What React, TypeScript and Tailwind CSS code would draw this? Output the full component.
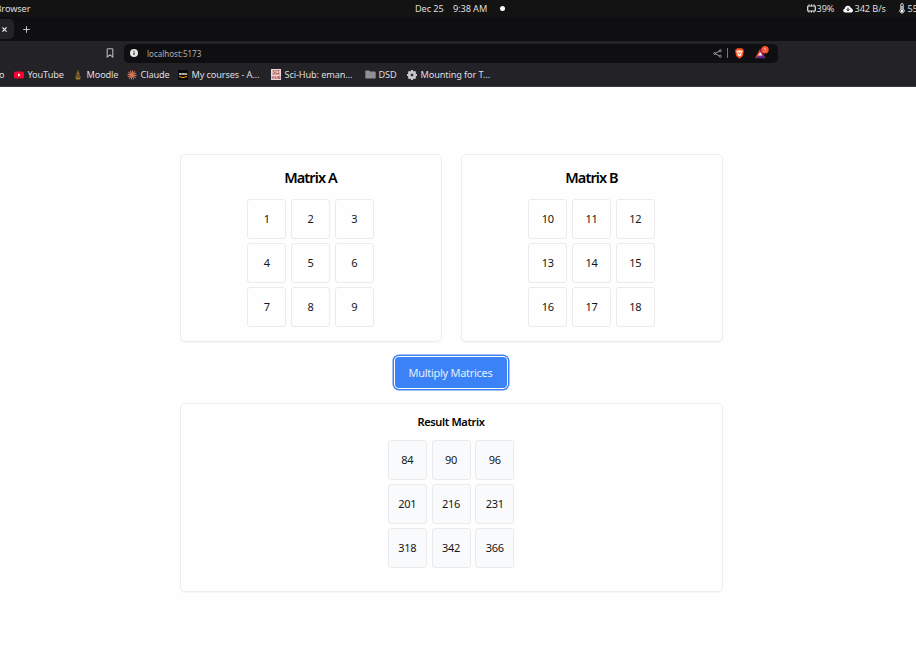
import React from "react";

const noto = "font-['Noto_Sans',sans-serif]";

function Matrix({ values, filled = false }: { values: number[]; filled?: boolean }) {
  return (
    <div className="grid grid-cols-[39px_39px_39px] gap-x-[4.7px] gap-y-[4.5px]">
      {values.map((v) => (
        <div
          key={v}
          className={
            "flex h-[39.5px] items-center justify-center rounded-[3px] border pt-px text-[11px] tracking-[-0.3px] text-[#161616] " +
            (filled ? "border-[#eaebed] bg-[#f9fafb]" : "border-[#ebebed] bg-[#fefefe]")
          }
        >
          {v}
        </div>
      ))}
    </div>
  );
}

function MatrixCard({ title, values }: { title: string; values: number[] }) {
  return (
    <section className="flex h-[188px] w-[262px] flex-col items-center rounded-[5px] border border-[#ededee] pt-3 shadow-[0_1px_1px_rgba(0,0,0,0.03)]">
      <h2 className="mb-3 h-5 text-[14.5px] leading-[21px] font-semibold tracking-[-0.9px] text-black">{title}</h2>
      <Matrix values={values} />
    </section>
  );
}

function Bookmark({ icon, label, className }: { icon: React.ReactNode; label: string; className: string }) {
  return (
    <div className={"flex h-4 shrink-0 items-center whitespace-nowrap " + className}>
      <span className="ml-[-0.5px] flex h-[11px] w-[11px] shrink-0 items-center justify-center">{icon}</span>
      <span className="ml-[3px]">{label}</span>
    </div>
  );
}

const rays = [0, 30, 60, 90, 120, 150];
const teeth = [0, 45, 90, 135];

export default function App() {
  return (
    <div className={"h-[660px] w-[916px] overflow-hidden bg-white " + noto}>
      <header className="flex h-[17px] items-center bg-[#131313] text-[9.2px] tracking-[-0.1px] text-[#dedede]">
        <div className="ml-[-4.5px] w-[419.5px] shrink-0 whitespace-nowrap">Browser</div>
        <div className="w-[38px] shrink-0 whitespace-nowrap">Dec 25</div>
        <div className="w-[46.5px] shrink-0 whitespace-nowrap">9:38 AM</div>
        <div className="h-[5px] w-[5px] shrink-0 rounded-full bg-white" />
        <svg className="ml-[302px] h-[9px] w-[9px] shrink-0" viewBox="0 0 9 9" fill="none" stroke="#e5e5e5">
          <rect x="0.7" y="2" width="7.6" height="5" rx="0.5" strokeWidth="1.2" />
          <path d="M2 0.4v1.6M4.5 0.4v1.6M7 0.4v1.6M2 7v1.6M4.5 7v1.6M7 7v1.6" />
        </svg>
        <div className="ml-[1px] w-[26px] shrink-0 whitespace-nowrap">39%</div>
        <svg className="h-[8px] w-[10px] shrink-0" viewBox="0 0 10 8">
          <path d="M2.4 7.5C.9 7.5.2 6.6.2 5.6.2 4.6.9 3.9 1.7 3.8 1.8 2 3 .7 4.9.7c1.6 0 2.8 1 3 2.6C9.2 3.5 9.9 4.4 9.9 5.4 9.9 6.7 9 7.5 7.8 7.5Z" fill="white" />
          <path d="M5 2.6v3.2M3.6 4.4 5 5.8l1.4-1.4" stroke="#131313" fill="none" />
        </svg>
        <div className="ml-[2px] w-[44px] shrink-0 whitespace-nowrap">342 B/s</div>
        <svg className="h-[11px] w-[6px] shrink-0" viewBox="0 0 6 11">
          <path d="M1.8 6V1.7a1.2 1.2 0 0 1 2.4 0V6a2.2 2.2 0 1 1-2.4 0Z" fill="none" stroke="#dedede" />
          <path d="M3 3v5" stroke="white" />
          <circle cx="3" cy="8" r="1.3" fill="white" />
        </svg>
        <div className="ml-[3px] shrink-0 whitespace-nowrap">55</div>
      </header>

      <nav className="flex h-6 items-center bg-[#0f0f11]">
        <div className="flex h-5 w-[14px] items-center rounded-r-[5px] bg-[#232327]">
          <svg className="ml-[2px] h-[5px] w-[5px]" viewBox="0 0 5 5" stroke="#eeeeee" strokeWidth="1.2">
            <path d="m.4.4 4.2 4.2m0-4.2L.4 4.6" />
          </svg>
        </div>
        <svg className="ml-[9px] h-[7px] w-[7px]" viewBox="0 0 7 7" stroke="#c6c6c8">
          <path d="M3.5.2v6.6M.2 3.5h6.6" />
        </svg>
      </nav>

      <div className="h-[46px] border-b border-[#39393e] bg-[#232327]">
        <div className="flex h-6 items-center">
          <svg className="ml-[106px] h-[10px] w-[8px]" viewBox="0 0 8 10" fill="none" stroke="#b8b8bb" strokeWidth="1.1">
            <path d="M1.2 1.6q0-.8.8-.8h4q.8 0 .8.8v7.4L4 6.9 1.2 9Z" />
          </svg>
          <div className="ml-[10px] flex h-[19px] w-[654px] items-center rounded-[5px] bg-[#0f0f11]">
            <svg className="ml-[6px] h-2 w-2" viewBox="0 0 8 8">
              <circle cx="4" cy="4" r="4" fill="#e6e6e7" />
              <path d="M4 3.5V6M4 1.8v1" stroke="#222225" strokeWidth="1.1" />
            </svg>
            <span className="ml-[9px] pt-px text-[8px] text-[#b1b1b3]">localhost:5173</span>
            <svg className="ml-auto h-[9px] w-[9px]" viewBox="0 0 9 9" fill="none" stroke="#a8a8aa" strokeWidth="0.9">
              <path d="M2.8 4 6.3 2.2M2.8 5l3.5 1.8" />
              <circle cx="1.7" cy="4.5" r="1" />
              <circle cx="7.3" cy="1.7" r="1" />
              <circle cx="7.3" cy="7.3" r="1" />
            </svg>
            <div className="ml-[5px] h-[10px] w-px bg-[#77777a]" />
            <svg className="ml-[7px] h-[11px] w-[9px]" viewBox="0 0 9 11">
              <path d="M2 .3h5l.7.9.9.2.2 1.5-.9 5L4.5 10.7 1.1 7.9l-.9-5 .2-1.5.9-.2Z" fill="#fb5422" />
              <path d="m1.8 2.5 1.4.3 1.3-.5 1.3.5 1.4-.3.3 1.4-1.3 2 .2 1-1.9 1.6-1.9-1.6.2-1-1.3-2Z" fill="white" />
              <path d="m2.6 4 1.3.6-.3 1.2M6.4 4l-1.3.6.3 1.2M4.5 5v1.6" fill="none" stroke="#fb5422" strokeWidth=".7" />
            </svg>
            <svg className="mr-[8px] ml-[11px] h-[15px] w-[15px]" viewBox="0 0 15 15">
              <path d="M5.3 2.6 0 12.3 5.3 9Z" fill="#ff4724" />
              <path d="M5.3 2.6 10.8 12.3 5.3 9Z" fill="#9e1f63" />
              <path d="M0 12.3h10.8L5.3 8.6Z" fill="#662d91" />
              <path d="M5.3 6 7.4 9.4H3.2Z" fill="white" />
              <circle cx="10" cy="3.8" r="3.7" fill="#fb542b" />
              <text x="10" y="5.9" textAnchor="middle" fontSize="5.5" fill="#ffd3c7">1</text>
            </svg>
          </div>
        </div>

        <div className="flex h-[21px] items-center overflow-hidden pb-[2px] text-[9.2px] tracking-[-0.12px] text-[#dedee0]">
          <div className="w-[14px] shrink-0"><span className="ml-[-1px]">o</span></div>
          <Bookmark className="w-[59px]" label="YouTube" icon={
            <svg className="h-2 w-[10px]" viewBox="0 0 10 8">
              <rect y=".5" width="10" height="7" rx="1.7" fill="#ff0033" />
              <path d="M4 2.5v3L6.7 4Z" fill="white" />
            </svg>
          } />
          <Bookmark className="w-[54px]" label="Moodle" icon={
            <svg className="h-[10px] w-[8px]" viewBox="0 0 8 10">
              <path d="M3.2.3h1.6v2l1.1 1-.5 1.5 1.5 2-.5 2.5H1.6l-.5-2.5 1.5-2-.5-1.5 1.1-1Z" fill="#6e5526" />
              <path d="M4 2.8v1.4M2 8.8h4" stroke="#b98a34" />
              <circle cx="4" cy="6.6" r="1" fill="#26221f" stroke="#ad8134" strokeWidth=".6" />
            </svg>
          } />
          <Bookmark className="w-[51px]" label="Claude" icon={
            <svg className="h-[10px] w-[10px]" viewBox="0 0 10 10" stroke="#d97757" strokeWidth="1">
              {rays.map((r) => <path key={r} d="M5 .4v9.2" transform={`rotate(${r + 8} 5 5)`} />)}
            </svg>
          } />
          <Bookmark className="w-[93px]" label="My courses - A…" icon={
            <svg className="h-[10px] w-[10px]" viewBox="0 0 10 10">
              <rect width="10" height="10" fill="#080808" />
              <text x="5" y="5.2" textAnchor="middle" fontSize="4.2" fontWeight="700" fill="white">aws</text>
              <path d="M1 6.5q4 2.3 8 0" stroke="#ff9900" fill="none" />
            </svg>
          } />
          <Bookmark className="w-[94px]" label="Sci-Hub: eman…" icon={
            <svg className="h-[11px] w-[10px]" viewBox="0 0 10 11">
              <rect width="10" height="11" fill="#ecd8d5" />
              <text x="5" y="4.6" textAnchor="middle" fontSize="4.7" fontWeight="700" fill="#b34742">SCI</text>
              <path d="M1 5.6h8" stroke="#c66b66" strokeWidth=".5" />
              <text x="5" y="10" textAnchor="middle" fontSize="4.2" fontWeight="700" fill="#b34742">HUB</text>
            </svg>
          } />
          <Bookmark className="w-[42px]" label="DSD" icon={
            <svg className="h-[9px] w-[11px]" viewBox="0 0 11 9">
              <path d="M.3 1.2Q.3.4 1.1.4h3l1 1.1h4.8q.8 0 .8.8v5.4q0 .8-.8.8H1.1q-.8 0-.8-.8Z" fill="#8e8e94" />
            </svg>
          } />
          <Bookmark className="w-[95px]" label="Mounting for T…" icon={
            <svg className="h-[10px] w-[10px]" viewBox="0 0 10 10" stroke="#c8c8c8">
              {teeth.map((r) => <path key={r} d="M5 0v2M5 8v2" strokeWidth="2" transform={`rotate(${r} 5 5)`} />)}
              <circle cx="5" cy="5" r="2.7" fill="none" strokeWidth="2.7" />
              <path d="m5 3.5 1.3 1.5L5 6.5" fill="none" stroke="#555555" strokeWidth=".7" />
            </svg>
          } />
        </div>
      </div>

      <main className="flex h-[516px] flex-col items-center bg-[#fefefe] pt-[67px] pr-[14px]">
        <div className="flex gap-[19px]">
          <MatrixCard title="Matrix A" values={[1, 2, 3, 4, 5, 6, 7, 8, 9]} />
          <MatrixCard title="Matrix B" values={[10, 11, 12, 13, 14, 15, 16, 17, 18]} />
        </div>
        <button className="mt-[15px] mr-px h-[31px] w-[112px] rounded-[4px] bg-[#3b82f6] pt-px text-[11px] tracking-[-0.28px] whitespace-nowrap text-[#e5efff] shadow-[0_0_0_1px_#fff,0_0_0_2.5px_#3b82f6]">
          Multiply Matrices
        </button>
        <section className="mt-[15px] flex h-[189px] w-[543px] flex-col items-center rounded-[5px] border border-[#ededee] pt-[9px] shadow-[0_1px_1px_rgba(0,0,0,0.03)]">
          <h3 className="mb-[9px] h-[18px] text-[11px] leading-[18px] font-semibold tracking-[-0.35px] text-black">Result Matrix</h3>
          <Matrix filled values={[84, 90, 96, 201, 216, 231, 318, 342, 366]} />
        </section>
      </main>
    </div>
  );
}
